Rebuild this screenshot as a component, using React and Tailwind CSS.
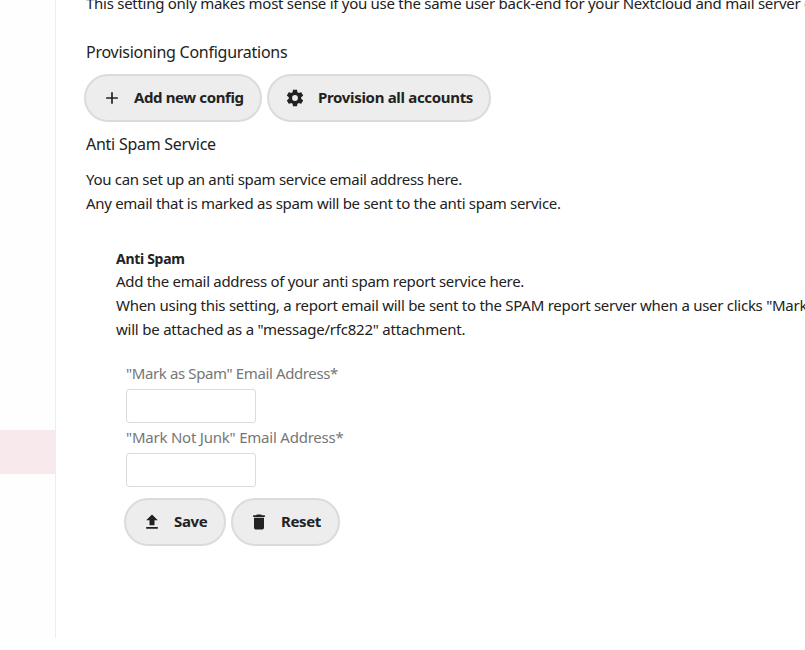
import React from "react";

const mdi = {
  plus: "M19,13H13V19H11V13H5V11H11V5H13V11H19V13Z",
  cog: "M12,15.5A3.5,3.5 0 0,1 8.5,12A3.5,3.5 0 0,1 12,8.5A3.5,3.5 0 0,1 15.5,12A3.5,3.5 0 0,1 12,15.5M19.43,12.97C19.47,12.65 19.5,12.33 19.5,12C19.5,11.67 19.47,11.34 19.43,11L21.54,9.37C21.73,9.22 21.78,8.95 21.66,8.73L19.66,5.27C19.54,5.05 19.27,4.96 19.05,5.05L16.56,6.05C16.04,5.66 15.5,5.32 14.87,5.07L14.5,2.42C14.46,2.18 14.25,2 14,2H10C9.75,2 9.54,2.18 9.5,2.42L9.13,5.07C8.5,5.32 7.96,5.66 7.44,6.05L4.95,5.05C4.73,4.96 4.46,5.05 4.34,5.27L2.34,8.73C2.21,8.95 2.27,9.22 2.46,9.37L4.57,11C4.53,11.34 4.5,11.67 4.5,12C4.5,12.33 4.53,12.65 4.57,12.97L2.46,14.63C2.27,14.78 2.21,15.05 2.34,15.27L4.34,18.73C4.46,18.95 4.73,19.03 4.95,18.95L7.44,17.94C7.96,18.34 8.5,18.68 9.13,18.93L9.5,21.58C9.54,21.82 9.75,22 10,22H14C14.25,22 14.46,21.82 14.5,21.58L14.87,18.93C15.5,18.67 16.04,18.34 16.56,17.94L19.05,18.95C19.27,19.03 19.54,18.95 19.66,18.73L21.66,15.27C21.78,15.05 21.73,14.78 21.54,14.63L19.43,12.97Z",
  upload: "M9,16V10H5L12,3L19,10H15V16H9M5,20V18H19V20H5Z",
  trash: "M19,4H15.5L14.5,3H9.5L8.5,4H5V6H19M6,19A2,2 0 0,0 8,21H16A2,2 0 0,0 18,19V7H6V19Z",
};

const Icon = ({ d }) => (
  <svg width="20" height="20" viewBox="0 0 24 24" fill="currentColor">
    <path d={d} />
  </svg>
);

const Btn = ({ icon, label, className, labelClass = "tracking-[-0.38px]" }) => (
  <button className={`h-12 flex items-center rounded-full border-2 border-[#dbdbdb] bg-[#ededed] text-[15px] font-bold text-[#222222] ${className}`}>
    <span className="w-12 pl-1 flex justify-center shrink-0">
      <Icon d={icon} />
    </span>
    <span className={`pb-[2px] ${labelClass}`}>{label}</span>
  </button>
);

const App = () => {
  return (
    <div className="h-[650px] w-[805px] overflow-hidden bg-white font-['Noto_Sans',sans-serif] text-[#222222] flex">
      {/* Sidebar */}
      <div className="w-[56px] h-[638px] shrink-0 border-r border-[#ededed] bg-[#fefefe] pt-[430px]">
        <div className="h-[44px] bg-[#f8e9ec]" />
      </div>

      {/* Content */}
      <div className="flex-1 min-w-0 pl-[30px] -mt-[9px] whitespace-nowrap tracking-[-0.3px]">
        <p className="text-[15px] leading-6 tracking-[-0.27px]">
          This setting only makes most sense if you use the same user back-end for your Nextcloud and mail server configuration.
        </p>
        <h3 className="text-base leading-6 mt-[25px] tracking-[-0.26px]">Provisioning Configurations</h3>
        <div className="flex gap-[5px] -ml-[2px] mt-[10px]">
          <Btn className="w-[178px]" icon={mdi.plus} label="Add new config" />
          <Btn className="w-[224px]" icon={mdi.cog} label="Provision all accounts" labelClass="ml-px tracking-[-0.32px]" />
        </div>
        <h3 className="text-base leading-6 mt-[10px] tracking-[-0.26px]">Anti Spam Service</h3>
        <p className="text-[15px] leading-[23px] mt-[12px]">You can set up an anti spam service email address here.</p>
        <p className="text-[15px] leading-[23px] mt-px">Any email that is marked as spam will be sent to the anti spam service.</p>

        <div className="ml-[30px] mt-[33px] text-[15px] leading-6">
          <p className="font-bold text-sm leading-[21px]">Anti Spam</p>
          <p>Add the email address of your anti spam report service here.</p>
          <p className="tracking-[-0.27px]">When using this setting, a report email will be sent to the SPAM report server when a user clicks "Mark as Spam". The original message</p>
          <p className="tracking-[-0.22px]">will be attached as a "message/rfc822" attachment.</p>
          <div className="ml-[10px] mt-[20px] text-[#767676] tracking-[-0.38px]">
            <label className="block leading-[24px]">"Mark as Spam" Email Address*</label>
            <input className="block w-[130px] h-[34px] mt-[4px] rounded-[3px] border border-[#dbdbdb] bg-white" />
            <label className="block leading-[24px] mt-[2px] tracking-[-0.22px]">"Mark Not Junk" Email Address*</label>
            <input className="block w-[130px] h-[34px] mt-[4px] rounded-[3px] border border-[#dbdbdb] bg-white" />
          </div>
          <div className="flex gap-[5px] ml-[8px] mt-[11px]">
            <Btn className="w-[102px]" icon={mdi.upload} label="Save" />
            <Btn className="w-[109px]" icon={mdi.trash} label="Reset" />
          </div>
        </div>
      </div>
    </div>
  );
};

export default App;
